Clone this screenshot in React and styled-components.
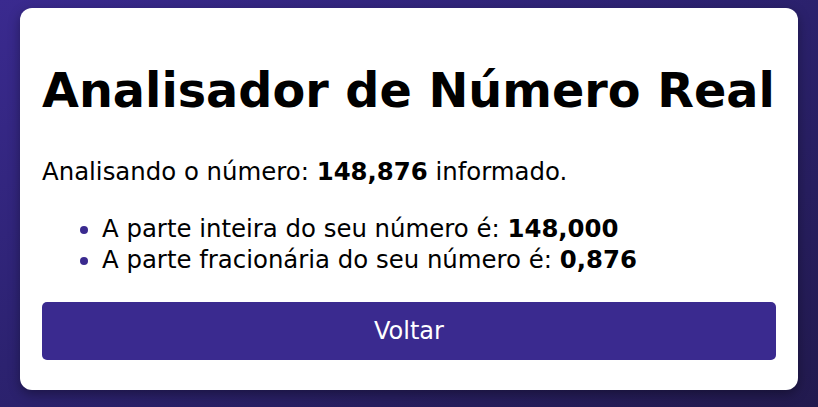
import React from 'react'
import styled, { createGlobalStyle } from 'styled-components'

const GlobalStyle = createGlobalStyle`
  html, body {
    margin: 0;
    padding: 0;
  }
  body {
    min-height: 407px;
    background: linear-gradient(to bottom right, #3a2a8f 0%, #2c2270 45%, #221a4e 100%);
    font-family: 'DejaVu Sans', Verdana, sans-serif;
  }
`

const Page = styled.main`
  padding: 8px 0 17px;
  display: flex;
  justify-content: center;
`

const Card = styled.section`
  width: 778px;
  box-sizing: border-box;
  background: #ffffff;
  border-radius: 12px;
  padding: 22px 22px 30px;
  box-shadow: 0 4px 12px rgba(0, 0, 0, 0.35);
`

const Title = styled.h1`
  font-size: 47.7px;
  font-weight: 700;
  color: #000;
  white-space: nowrap;
  margin: 34px 0 38px;
  line-height: 1.15;
`

const Text = styled.p`
  font-size: 24.4px;
  color: #000;
  margin: 0 0 26px;
  line-height: 30px;
`

const List = styled.ul`
  margin: 0 0 27px;
  padding-left: 60px;
  font-size: 24.4px;
  line-height: 31px;

  li::marker {
    color: #3a2a8f;
  }
`

const Button = styled.button`
  display: block;
  width: 100%;
  height: 58px;
  border: none;
  border-radius: 5px;
  background: #3a2a8f;
  color: #ffffff;
  font-family: 'DejaVu Sans', Verdana, sans-serif;
  font-size: 24px;
  cursor: pointer;
`

export default function App () {
  return (
    <>
      <GlobalStyle />
      <Page>
        <Card>
          <Title>Analisador de Número Real</Title>
          <Text>Analisando o número: <strong>148,876</strong> informado.</Text>
          <List>
            <li>A parte inteira do seu número é: <strong>148,000</strong></li>
            <li>A parte fracionária do seu número é: <strong>0,876</strong></li>
          </List>
          <Button>Voltar</Button>
        </Card>
      </Page>
    </>
  )
}
